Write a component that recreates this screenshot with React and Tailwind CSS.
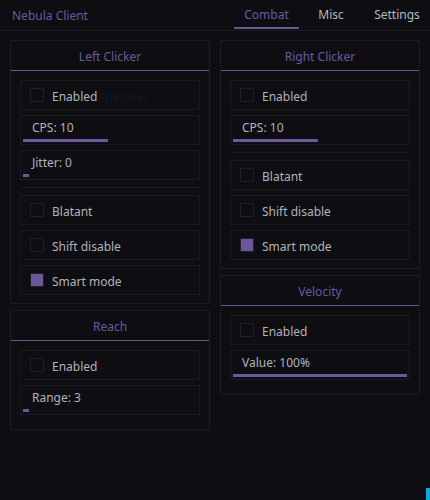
import { useState } from 'react';

const CheckRow = ({ label, checked, bind }) => (
    <div className="h-[30px] border border-[#1a1a21] flex items-center pl-[9px]">
        {checked ? (
            <div className="w-[14px] h-[14px] border border-[#1f1f27] bg-[#6b5699]" />
        ) : (
            <div className="w-[14px] h-[14px] border border-[#1f1f27]" />
        )}
        <span className="ml-[8px] pt-[3px] text-[#b3b3ba]">{label}</span>
        {bind && <span className="ml-[8px] pt-[3px] text-[#17171d]">{bind}</span>}
    </div>
);

const SliderRow = ({ label, fill }) => (
    <div className="h-[30px] border border-[#1a1a21] flex flex-col justify-between px-[2px] pb-[2px]">
        <span className="pl-[9px] pt-[4px] leading-[16px] text-[#b3b3ba]">{label}</span>
        <div className="h-[3px] bg-[#6e599e] min-w-[6px]" style={{ width: fill }} />
    </div>
);

const Separator = () => <div className="h-px bg-[#1a1a21] my-[2px]" />;

const Panel = ({ title, pb, children }) => (
    <div className={`border border-[#1c1c23] ${pb}`}>
        <div className="h-[30px] pt-[2px] border-b border-[#6a5699] flex items-center justify-center text-[#6c5a9f]">
            {title}
        </div>
        <div className="flex flex-col gap-[5px] px-[9px] pt-[9px]">{children}</div>
    </div>
);

const tabs = [
    { name: 'Combat', cls: 'w-[65px]' },
    { name: 'Misc', cls: 'w-[48px] ml-[8px]' },
    { name: 'Settings', cls: 'w-[66px] ml-[9px]' },
];

export default function App() {
    const [tab, setTab] = useState('Combat');

    return (
        <div className="w-[430px] h-[500px] bg-[#0d0d12] relative overflow-hidden font-['Noto_Sans',sans-serif] text-[12px]">
            <div className="h-[31px] border-b border-[#1c1c23] flex items-start justify-between pl-[12px]">
                <span className="h-[29px] pt-[2px] flex items-center text-[#6b5a9e]">Nebula Client</span>
                <div className="flex h-[29px]">
                    {tabs.map((t) => (
                        <button
                            key={t.name}
                            onClick={() => setTab(t.name)}
                            className={
                                t.name === tab
                                    ? `${t.cls} h-full pt-[2px] border-b-2 border-[#6a5699] text-[#6c5a9f] text-center`
                                    : `${t.cls} h-full pt-[2px] border-b-2 border-transparent text-[#b8b8be] text-center`
                            }
                        >
                            {t.name}
                        </button>
                    ))}
                </div>
            </div>

            <div className="flex gap-[10px] px-[10px] pt-[9px]">
                <div className="w-[200px] flex flex-col gap-[6px]">
                    <Panel title="Left Clicker" pb="pb-[8px]">
                        <CheckRow label="Enabled" bind="[NONE]" />
                        <SliderRow label="CPS: 10" fill="49%" />
                        <SliderRow label="Jitter: 0" fill="0%" />
                        <Separator />
                        <CheckRow label="Blatant" />
                        <CheckRow label="Shift disable" />
                        <CheckRow label="Smart mode" checked />
                    </Panel>
                    <Panel title="Reach" pb="pb-[14px]">
                        <CheckRow label="Enabled" />
                        <SliderRow label="Range: 3" fill="0%" />
                    </Panel>
                </div>

                <div className="w-[200px] flex flex-col gap-[6px]">
                    <Panel title="Right Clicker" pb="pb-[8px]">
                        <CheckRow label="Enabled" />
                        <SliderRow label="CPS: 10" fill="49%" />
                        <Separator />
                        <CheckRow label="Blatant" />
                        <CheckRow label="Shift disable" />
                        <CheckRow label="Smart mode" checked />
                    </Panel>
                    <Panel title="Velocity" pb="pb-[14px]">
                        <CheckRow label="Enabled" />
                        <SliderRow label="Value: 100%" fill="100%" />
                    </Panel>
                </div>
            </div>

            <div className="absolute right-0 bottom-0 w-[4px] h-[12px] bg-[#0aa8e8]" />
        </div>
    );
}
